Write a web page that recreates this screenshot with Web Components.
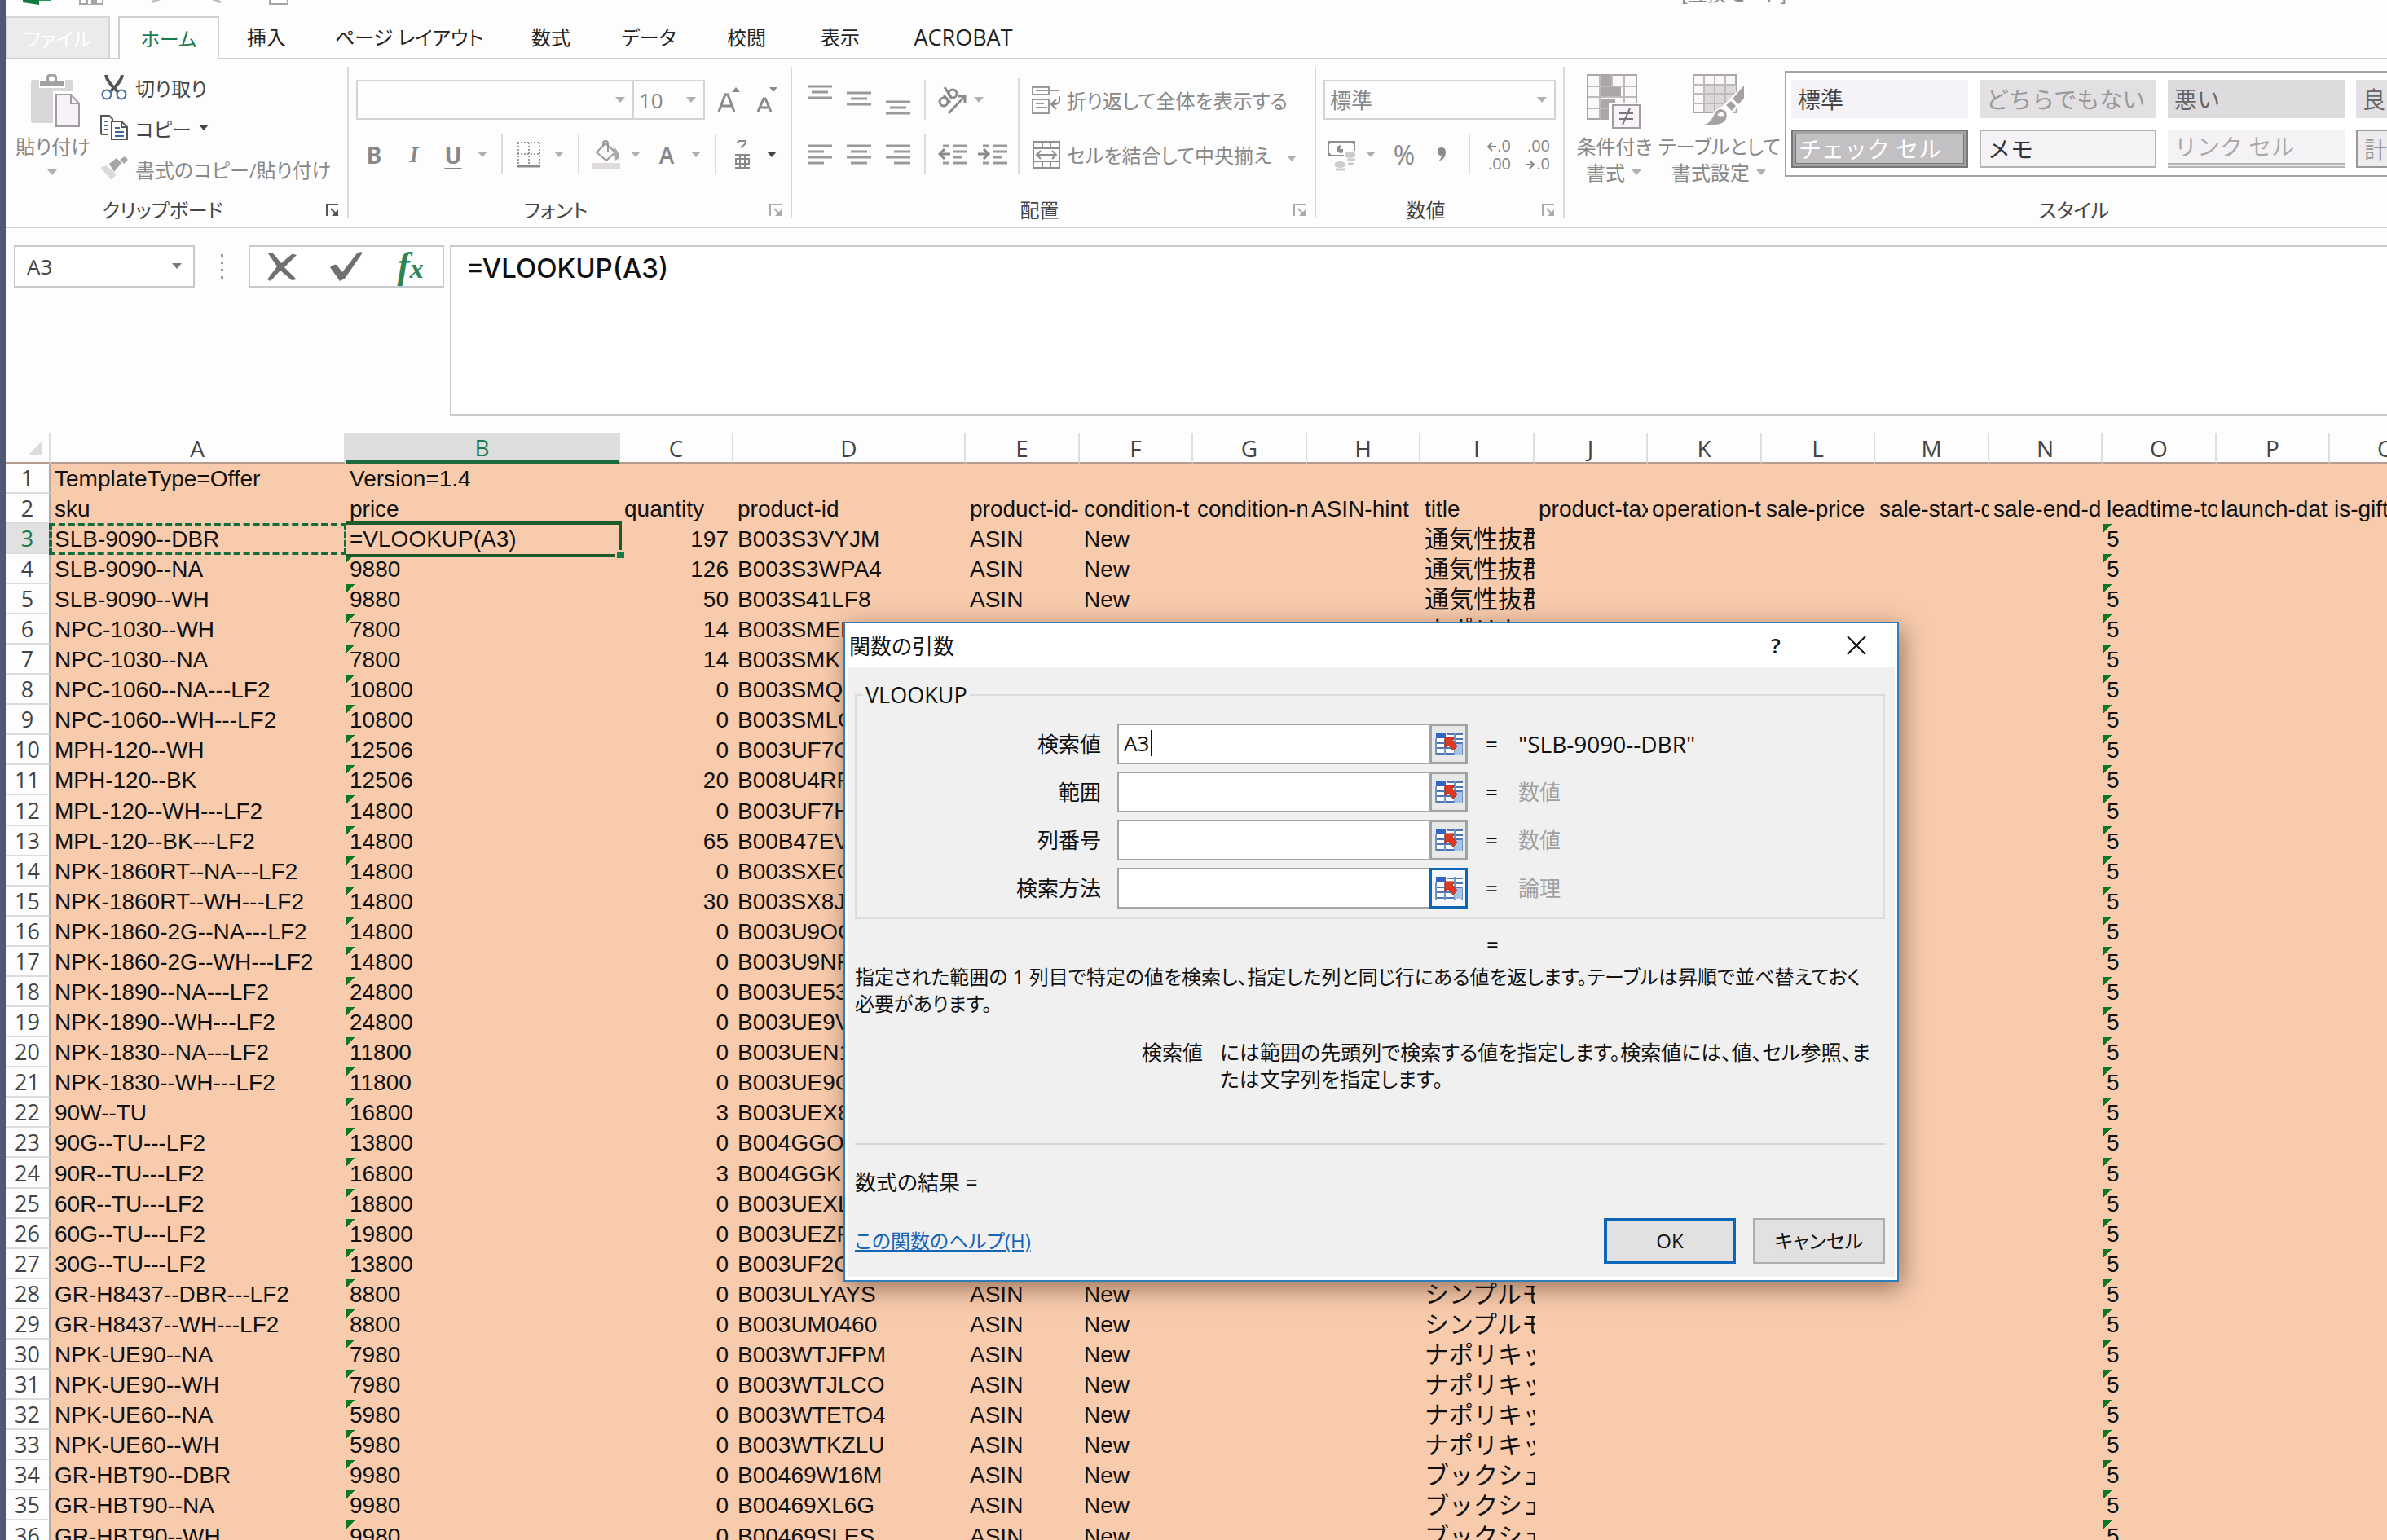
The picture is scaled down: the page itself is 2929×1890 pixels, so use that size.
<!DOCTYPE html>
<html lang="ja">
<head>
<meta charset="utf-8">
<title>VLOOKUP</title>
<style>
html, body { margin: 0; height: 100%; }
body {
  overflow: hidden;
  background: #fdfdfd;
  color: #222;
  font-family: "Open Sans", "Noto Sans CJK JP", sans-serif;
  font-feature-settings: "palt";
  font-size: 24px;
}
</style>
</head>
<body>
<excel-app></excel-app>
<script>
const define = (name, html, setup) => {
  const template = document.createElement('template');
  template.innerHTML = html;
  customElements.define(name, class extends HTMLElement {
    connectedCallback() {
      if (this.shadowRoot) return;
      this.attachShadow({ mode: 'open' }).append(template.content.cloneNode(true));
      if (setup) setup(this, this.shadowRoot);
    }
  });
};

const lines = (rows, w, h) => [w, h, rows.map(([x, y, l]) => `<path d="M${x} ${y}h${l}" stroke="#9a9a9a" stroke-width="3"/>`).join('')];
const ICONS = {
  arrow: [14, 8, '<path d="M0 0h12l-6 7z" fill="currentColor"/>'],
  launcher: [18, 18, '<path d="M2 16V2h14" fill="none" stroke="currentColor" stroke-width="2"/><path d="M7 7l7 7" stroke="currentColor" stroke-width="2"/><path d="M16 8v8H8z" fill="currentColor"/>'],
  excel: [36, 26, '<path d="M0 4l20-4v26L0 23z" fill="#0f7b41"/><path d="M20 5h14v16H20z" fill="#1d9a58"/>'],
  save: [30, 26, '<path d="M1 1h28v24H1z" fill="none" stroke="#a5a5a5" stroke-width="2"/><path d="M8 14h14v11H8z" fill="#a5a5a5"/><path d="M11 18h4v7h-4z" fill="#fff"/>'],
  undo: [28, 26, '<path d="M4 8h12a7 7 0 0 1 0 14l-6 3" fill="none" stroke="#bbb" stroke-width="3"/><path d="M8 1L1 8l7 7z" fill="#bbb"/>'],
  redo: [28, 26, '<path d="M24 8H12a7 7 0 0 0 0 14l6 3" fill="none" stroke="#bbb" stroke-width="3"/><path d="M20 1l7 7-7 7z" fill="#bbb"/>'],
  page: [24, 26, '<path d="M1 1h22v24H1z" fill="#fff" stroke="#a5a5a5" stroke-width="2"/>'],
  paste: [62, 66, '<path d="M3 7h45q4 0 4 4v46q0 3-3 3H3q-3 0-3-3V10q0-3 3-3z" fill="#d9d6d9"/><path d="M10 5h32v12H10z" fill="#fff"/><path d="M11 15V8h8V4q0-4 4-4h5q4 0 4 4v4h8v7z" fill="#a3a0a3"/><circle cx="25.500" cy="6" r="3.500" fill="#fff"/><path d="M27 21h24l11 12v33H27z" fill="#fff"/><path d="M31 25h18l10 11v28H31z" fill="#f6f2f8" stroke="#a09da0" stroke-width="2"/><path d="M49 25v11h10" fill="none" stroke="#a09da0" stroke-width="2"/>'],
  cut: [32, 34, '<path d="M6 2q1 8 14 20M26 2q-1 8-14 20" fill="none" stroke="#555" stroke-width="4"/><circle cx="7" cy="26" r="5.500" fill="#fff" stroke="#3d6a9c" stroke-width="2"/><circle cx="25" cy="26" r="5.500" fill="#fff" stroke="#3d6a9c" stroke-width="2"/>'],
  copy: [34, 32, '<path d="M1 24V1h10l4 4v5M1 24h9" fill="none" stroke="#555" stroke-width="2"/><path d="M5 8h5M5 13h5M5 18h5" stroke="#3d6a9c" stroke-width="2"/><path d="M14 8h12l7 7v15H14z" fill="#fff" stroke="#555" stroke-width="2"/><path d="M26 8v7h7" fill="none" stroke="#555" stroke-width="2"/><path d="M18 16h6M18 21h11M18 26h11" stroke="#3d6a9c" stroke-width="2"/>'],
  painter: [36, 30, '<path d="M1 14l7-3 13 11-6 7z" fill="#dcd8dc"/><path d="M12 9l9-7 6 6-9 11zM13 8l8 13" fill="#a5a5a5"/><path d="M25 4l6-4 4 4-5 5z" fill="#a5a5a5"/>'],
  grow: [32, 32, '<path d="M3 30L11 9h3l8 21M6 23h13" fill="none" stroke="#8a8a8a" stroke-width="3"/><path d="M19 6l5-6 5 6z" fill="#8a8a8a"/>'],
  shrink: [30, 32, '<path d="M2 30L9 14h2l7 16M4 25h12" fill="none" stroke="#8a8a8a" stroke-width="3"/><path d="M16 0h10l-5 6z" fill="#8a8a8a"/>'],
  borders: [30, 32, '<path d="M1 1h28M1 15h28M2 1v28M15 1v28M28 1v28" stroke="#9c9a9c" stroke-width="2" stroke-dasharray="2 2"/><path d="M1 30h28" stroke="#8a8a8a" stroke-width="3"/>'],
  bucket: [36, 36, '<path d="M0 28h34v7H0z" fill="#dedade"/><path d="M5 15L16 4l12 11-11 10z" fill="#fdf8fd" stroke="#999" stroke-width="2"/><path d="M13 9V4q0-3 3-3t3 3v10" fill="none" stroke="#999" stroke-width="2"/><path d="M25 8q8 5 8 14l-5 3-1-9z" fill="#aaa"/>'],
  ruby: [22, 38, '<path d="M6 2h9q0 5-6 8M4 4h3" fill="none" stroke="#888" stroke-width="2"/><path d="M2 19h18M2 35h18M8 19v16M14 19v16M3 24h16v6H3z" fill="none" stroke="#888" stroke-width="2"/>'],
  top: lines([[0, 2, 30], [5, 9, 20], [0, 16, 30]], 30, 18),
  mid: lines([[0, 2, 30], [5, 9, 20], [0, 16, 30]], 30, 18),
  left: lines([[0, 2, 30], [0, 9, 20], [0, 16, 30], [0, 23, 20]], 30, 25),
  center: lines([[0, 2, 30], [5, 9, 20], [0, 16, 30], [5, 23, 20]], 30, 25),
  right: lines([[0, 2, 30], [10, 9, 20], [0, 16, 30], [10, 23, 20]], 30, 25),
  outdent: [36, 25, '<path d="M6 2h8M18 2h18M18 9h18M18 16h12M6 23h8M18 23h18" stroke="#9a9a9a" stroke-width="3"/><path d="M15 12H2M8 6l-6 6 6 6" fill="none" stroke="#8a8a8a" stroke-width="3"/>'],
  indent: [36, 25, '<path d="M6 2h8M18 2h18M18 9h18M18 16h12M6 23h8M18 23h18" stroke="#9a9a9a" stroke-width="3"/><path d="M0 12h13M7 6l6 6-6 6" fill="none" stroke="#8a8a8a" stroke-width="3"/>'],
  orient: [38, 36, '<g fill="none" stroke="#8a8a8a" stroke-width="3"><circle cx="8" cy="20" r="5"/><path d="M8 12l8 9"/><circle cx="19" cy="10" r="5"/><path d="M9 2l8 12"/><path d="M14 34L34 13M26 13h8v8"/></g>'],
  wrap: [36, 36, '<path d="M1 2h20v9H1z" fill="none" stroke="#999" stroke-width="2"/><path d="M5 6h28" stroke="#999" stroke-width="2"/><path d="M1 17h15l5 0v17H1z" fill="none" stroke="#999" stroke-width="2"/><path d="M5 22h10M5 27h14" stroke="#999" stroke-width="2"/><path d="M34 13v6q0 4-8 4M30 17l-6 6 6 6" fill="none" stroke="#888" stroke-width="2"/>'],
  merge: [34, 34, '<path d="M1 1h32v32H1zM1 9h32M1 25h32M12 1v8M22 1v8M12 25v8M22 25v8" fill="none" stroke="#8f8f8f" stroke-width="2"/><path d="M5 17h24M10 12l-5 5 5 5M24 12l5 5-5 5" fill="none" stroke="#8f8f8f" stroke-width="2"/>'],
  currency: [38, 38, '<path d="M1 3h32v17H1z" fill="none" stroke="#8f8f8f" stroke-width="2"/><path d="M0 2h7l-7 6zM34 2h-7l7 6zM0 21h7l-7-6z" fill="#8f8f8f"/><path d="M17 7a5 5 0 1 0 2 9v-4h-4z" fill="#8f8f8f"/><path d="M20 14h14v18H20z" fill="#fff"/><path d="M21 17q6-4 13 0v4q-7 4-13 0zM9 29q6-4 13 0v4q-7 4-13 0z" fill="#cfcacf"/><path d="M24 25h10M25 30h8M10 37h11" stroke="#cfcacf" stroke-width="3"/>'],
  comma: [12, 20, '<path d="M1 6q0-5 5-5 5 0 5 6 0 8-9 11 4-4 4-7-5 0-5-5z" fill="#8a8a8a"/>'],
  leftArrow: [12, 12, '<path d="M12 6H2M7 1L2 6l5 5" fill="none" stroke="#8a8a8a" stroke-width="2"/>'],
  rightArrow: [12, 12, '<path d="M0 6h10M5 1l5 5-5 5" fill="none" stroke="#8a8a8a" stroke-width="2"/>'],
  cond: [68, 68, '<path d="M1 1h60v54H1z" fill="#fbf8fb" stroke="#a9a5a9" stroke-width="2"/><path d="M17 2h14v12H17zM17 16h25v12H17zM17 30h18v12H17zM17 43h12v12H17z" fill="#aaa6aa"/><path d="M16 1v54M31 1v13M46 1v54M1 15h60M1 28h60M1 42h60" stroke="#bdb9bd" stroke-width="2"/><path d="M27 35h41v33H27z" fill="#fff"/><path d="M32 38h33v28H32z" fill="#f7f3f8" stroke="#a19da1" stroke-width="2"/><path d="M40 48h17M40 55h17M53 42l-9 20" stroke="#777" stroke-width="2"/>'],
  tableStyle: [66, 64, '<path d="M1 1h52v46H1z" fill="#fbf8fb" stroke="#a9a5a9" stroke-width="2"/><path d="M14 13h39v34H14z" fill="#dcd8dc"/><path d="M14 1v46M27 1v46M40 1v46M1 13h52M1 24h52M1 36h52" stroke="#bdb9bd" stroke-width="2"/><path d="M67 8L36 40q-12 4-21 24l24-2 10-14 18-22z" fill="#fff"/><path d="M63 14v16l-7 7-7-7z" fill="#a5a1a5"/><path d="M47 33l6 6-5 6-7-7z" fill="#a5a1a5"/><path d="M15 62q8-3 12-14 6-9 14-2 4 16-16 16z" fill="#a5a1a5"/><path d="M30 50q6-7 9 0-3 3-9 0z" fill="#fff"/>'],
  cancel: [38, 36, '<path d="M2 2q4-3 7 1l9 11L31 3q4 0 6 1L22 19l15 15-6 1-14-12L5 36l-4-2 12-16z" fill="#707070"/>'],
  enter: [42, 36, '<path d="M1 19q4-4 8-3l7 9L34 2q4-3 7-1L19 33l-6 3z" fill="#707070"/>'],
  close: [24, 24, '<path d="M1 1l22 22M23 1L1 23" stroke="#111" stroke-width="2"/>'],
  picker: [34, 30, '<path d="M1 1h33v28H1z" fill="#fff"/><path d="M1 1h12v7H1z" fill="#3565c4"/><path d="M15 3h19M13 9h21M1 14h33M1 20h33M1 27h33" stroke="#4c76b4" stroke-width="2"/><path d="M12 9v20M24 1v28M1 8v21M33 14v15" stroke="#6f94c8" stroke-width="2"/><path d="M24 15h9v13h-9z" fill="#a9c3e6"/><path d="M12 7h11l-2 4 6 7-5 5-6-7-4 4z" fill="#dd3a22" stroke="#b52414"/>'],
  corner: [18, 18, '<path d="M18 0v18H0z" fill="#dcdcdc"/>']
};

define('ui-icon', '<style>:host{display:inline-flex;flex:none}svg{display:block;overflow:visible}</style>', (el, root) => {
  const [w, h, body] = ICONS[el.getAttribute('name')];
  root.innerHTML += `<svg width="${w}" height="${h}" viewBox="0 0 ${w} ${h}" aria-hidden="true">${body}</svg>`;
});

define('title-strip', `
<style>
:host { display: flex; height: 20px; overflow: hidden; align-items: flex-start; }
nav { display: flex; gap: 49px; padding-left: 21px; flex: 0 0 2056px; box-sizing: border-box; }
nav ui-icon { margin-top: -20px; }
nav ui-icon[name="save"] { margin-left: -16px; }
nav ui-icon[name="undo"], nav ui-icon[name="redo"] { margin-top: -22px; }
span { color: #8a8a8a; font-size: 24px; line-height: 32px; margin-top: -24px; }
</style>
<nav><ui-icon name="excel"></ui-icon><ui-icon name="save"></ui-icon><ui-icon name="undo"></ui-icon><ui-icon name="redo"></ui-icon><ui-icon name="page"></ui-icon></nav>
<span>[互換モード]</span>`);

define('ribbon-tabs', `
<style>
:host { display: flex; height: 53px; box-sizing: border-box; border-bottom: 2px solid #cfcfcf; }
button { all: unset; box-sizing: border-box; height: 51px; font-size: 24px; text-align: center; white-space: nowrap; color: #222; flex: 0 0 var(--w); line-height: 52px; }
.file { background: #ebebeb; color: #fff; border: 2px solid #d6d6d6; border-bottom: 0; margin-right: 10px; }
.home { background: #fdfdfd; color: #1b7a4b; border: 2px solid #cfcfcf; border-bottom: 0; height: 53px; }
.latin { font-size: 27px; }
</style>
<button class="file" style="--w:128px">ファイル</button>
<button class="home" style="--w:124px">ホーム</button>
<button style="--w:116px">挿入</button>
<button style="--w:234px">ページ レイアウト</button>
<button style="--w:114px">数式</button>
<button style="--w:126px">データ</button>
<button style="--w:114px">校閲</button>
<button style="--w:116px">表示</button>
<button class="latin" style="--w:186px">ACROBAT</button>`);

define('ribbon-group', `
<style>
:host { display: flex; flex-direction: column; box-sizing: border-box; height: 186px; border-right: 2px solid #d9d9d9; }
.body { flex: 1; display: flex; min-height: 0; }
footer { display: flex; align-items: center; height: 20px; padding-right: 2px; line-height: 20px; font-size: 24px; color: #444; }
footer span { flex: 1; text-align: center; white-space: nowrap; }
button { all: unset; width: 32px; display: flex; justify-content: center; color: #aaa; }
:host([active]) button { color: #555; }
</style>
<div class="body"><slot></slot></div>
<footer><span></span><button><ui-icon name="launcher"></ui-icon></button></footer>`, (el, root) => {
  root.querySelector('span').textContent = el.getAttribute('label');
  root.querySelector('button').setAttribute('aria-label', el.getAttribute('label') + 'の設定');
});

define('style-swatch', `
<style>
:host { display: block; box-sizing: border-box; height: 47px; background: #e3e0e3; color: #999; font-feature-settings: normal; }
button { all: unset; box-sizing: border-box; width: 100%; height: 100%; padding-left: 8px; font-size: 28px; line-height: 38px; white-space: nowrap; overflow: hidden; }
:host([kind=normal]) { background: #f5f2f8; color: #444; }
:host([kind=bad]) { background: #dddbdd; color: #666; }
:host([kind=good]) { color: #666; }
:host([kind=check]) { background: #c3c0c3; color: #fff; border: 2px solid #777; }
:host([kind=check]) button { border: 3px solid #a5a2a5; outline: 1px solid #777; outline-offset: -4px; padding-left: 4px; line-height: 32px; }
:host([kind=memo]) { background: #f5f2f6; color: #333; border: 2px solid #b5b2b5; }
:host([kind=link]) { background: #f5f2f6; color: #aaa; border-bottom: 6px double #b5b2b5; }
:host([kind=calc]) { background: #eeebee; border: 2px solid #999; }
</style>
<button><slot></slot></button>`);

define('excel-ribbon', `
<style>
:host { display: flex; box-sizing: border-box; height: 207px; padding-top: 9px; border-bottom: 2px solid #cfcfcf; overflow: hidden; color: #888; }
ribbon-group { flex: 0 0 var(--w); min-width: 0; }
button { all: unset; display: flex; align-items: center; justify-content: center; white-space: nowrap; }
.arrow { color: #b0b0b0; }
.dark { color: #444; }
.big { flex-direction: column; justify-content: flex-start; line-height: 32px; font-size: 24px; box-sizing: border-box; padding-top: 9px; }
.big span { display: flex; align-items: center; gap: 8px; min-height: 32px; }
.big ui-icon:first-child { height: 66px; margin-bottom: 7px; }
.big ui-icon[name="paste"] { margin-left: 8px; }
.big span ui-icon:first-child { height: 8px; margin: 0; }
.stack { display: flex; flex-direction: column; }
.stack button { height: 50px; justify-content: flex-start; gap: 9px; }
.stack button ui-icon:first-child { width: 34px; justify-content: center; }
.rows { display: flex; flex-direction: column; gap: 18px; padding: 16px 0 0 9px; }
.wide { flex: 1; min-width: 0; padding-left: 0; }
.row { display: flex; height: 49px; }
.row > * { flex: 0 0 var(--w); }
.sep::before { content: ""; height: 100%; border-left: 2px solid #dcdcdc; }
.sep { display: flex; justify-content: center; }
.tall { padding-top: 14px; flex: 0 0 18px; height: 118px; }
select { appearance: none; box-sizing: border-box; border: 2px solid #d4d4d4; border-radius: 0; background: #fdfdfd; color: #888; font: inherit; font-size: 26px; padding: 0 6px; width: 100%; height: 49px; opacity: 1; }
.combo { display: flex; align-items: center; position: relative; }
.combo ui-icon { position: absolute; right: 9px; color: #b0b0b0; pointer-events: none; }
.size select { margin-left: -2px; width: 89px; }
b, i, u { font-size: 28px; }
i { font-family: "Liberation Serif", serif; font-weight: bold; }
u { font-weight: bold; text-underline-offset: 5px; }
.valign { align-items: flex-start; }
.dec { display: block; font-size: 20px; line-height: 22px; text-align: right; }
.dec ui-icon { margin-right: 1px; }
.text { justify-content: flex-start; }
.text > * { flex: none; }
.text ui-icon:first-child { width: 50px; justify-content: center; }
.text .arrow { margin-left: 19px; }
.text .arrow ui-icon { width: 14px; }
.gallery { margin: 5px 0 0 12px; flex: 1; height: 130px; box-sizing: border-box; border: 2px solid #a3a3a3; padding: 9px 6px; display: grid; grid-template-columns: repeat(4, 217px); gap: 14px; overflow: hidden; background: #fff; }
</style>
<ribbon-group active label="クリップボード" style="--w:421px">
  <button class="big" style="width:116px"><ui-icon name="paste"></ui-icon><span>貼り付け</span><span class="arrow"><ui-icon name="arrow"></ui-icon></span></button>
  <div class="stack">
    <button class="dark"><ui-icon name="cut"></ui-icon>切り取り</button>
    <button class="dark"><ui-icon name="copy"></ui-icon>コピー<ui-icon name="arrow"></ui-icon></button>
    <button><ui-icon name="painter"></ui-icon>書式のコピー/貼り付け</button>
  </div>
</ribbon-group>
<ribbon-group label="フォント" style="--w:544px">
  <div class="rows">
    <div class="row">
      <div class="combo" style="--w:341px"><select aria-label="フォント名"><option></option></select><ui-icon name="arrow"></ui-icon></div>
      <div class="combo size" style="--w:87px"><select aria-label="フォント サイズ"><option>10</option></select><ui-icon name="arrow"></ui-icon></div>
      <button style="--w:60px" aria-label="拡大"><ui-icon name="grow"></ui-icon></button>
      <button style="--w:36px" aria-label="縮小"><ui-icon name="shrink"></ui-icon></button>
    </div>
    <div class="row">
      <button style="--w:44px"><b>B</b></button><button style="--w:54px"><i>I</i></button><button style="--w:42px"><u>U</u></button>
      <button class="arrow" style="--w:32px" aria-label="下線"><ui-icon name="arrow"></ui-icon></button><span class="sep" style="--w:14px"></span>
      <button style="--w:52px" aria-label="罫線"><ui-icon name="borders"></ui-icon></button><button class="arrow" style="--w:24px" aria-label="罫線の種類"><ui-icon name="arrow"></ui-icon></button><span class="sep" style="--w:22px"></span>
      <button style="--w:48px" aria-label="塗りつぶし"><ui-icon name="bucket"></ui-icon></button><button class="arrow" style="--w:24px" aria-label="塗りつぶしの色"><ui-icon name="arrow"></ui-icon></button>
      <button style="--w:50px;font-size:28px;font-weight:600">A</button><button class="arrow" style="--w:24px" aria-label="文字の色"><ui-icon name="arrow"></ui-icon></button><span class="sep" style="--w:22px"></span>
      <button style="--w:44px" aria-label="ふりがな"><ui-icon name="ruby"></ui-icon></button><button class="dark" style="--w:30px" aria-label="ふりがなの設定"><ui-icon name="arrow"></ui-icon></button>
    </div>
  </div>
</ribbon-group>
<ribbon-group label="配置" style="--w:643px">
  <div class="rows">
    <div class="row">
      <button class="valign" style="--w:50px;padding-top:6px" aria-label="上揃え"><ui-icon name="top"></ui-icon></button>
      <button class="valign" style="--w:46px;padding-top:14px" aria-label="上下中央"><ui-icon name="mid"></ui-icon></button>
      <button class="valign" style="--w:50px;padding-top:25px" aria-label="下揃え"><ui-icon name="mid"></ui-icon></button>
      <span class="sep" style="--w:16px"></span>
      <button style="--w:52px" aria-label="方向"><ui-icon name="orient"></ui-icon></button><button class="arrow" style="--w:12px" aria-label="方向の種類"><ui-icon name="arrow"></ui-icon></button>
    </div>
    <div class="row">
      <button style="--w:50px" aria-label="左揃え"><ui-icon name="left"></ui-icon></button>
      <button style="--w:46px" aria-label="中央揃え"><ui-icon name="center"></ui-icon></button>
      <button style="--w:50px" aria-label="右揃え"><ui-icon name="right"></ui-icon></button>
      <span class="sep" style="--w:16px"></span>
      <button style="--w:52px" aria-label="インデントを減らす"><ui-icon name="outdent"></ui-icon></button><button style="--w:46px" aria-label="インデントを増やす"><ui-icon name="indent"></ui-icon></button>
    </div>
  </div>
  <span class="sep tall"></span>
  <div class="rows wide">
    <button class="row text"><ui-icon name="wrap"></ui-icon>折り返して全体を表示する</button>
    <button class="row text"><ui-icon name="merge"></ui-icon>セルを結合して中央揃え<span class="arrow"><ui-icon name="arrow"></ui-icon></span></button>
  </div>
</ribbon-group>
<ribbon-group label="数値" style="--w:305px">
  <div class="rows">
    <div class="row"><div class="combo" style="--w:285px"><select aria-label="表示形式"><option>標準</option></select><ui-icon name="arrow"></ui-icon></div></div>
    <div class="row">
      <button style="--w:48px" aria-label="通貨"><ui-icon name="currency"></ui-icon></button><button class="arrow" style="--w:22px" aria-label="通貨の種類"><ui-icon name="arrow"></ui-icon></button>
      <button style="--w:58px;font-size:32px">%</button><button style="--w:34px" aria-label="桁区切り"><ui-icon name="comma"></ui-icon></button>
      <span class="sep" style="--w:34px"></span>
      <button class="dec" style="--w:34px"><ui-icon name="leftArrow"></ui-icon>.0<br>.00</button>
      <button class="dec" style="--w:48px">.00<br><ui-icon name="rightArrow"></ui-icon>.0</button>
    </div>
  </div>
</ribbon-group>
<ribbon-group label="スタイル" style="--w:1286px">
  <button class="big" style="width:122px"><ui-icon name="cond"></ui-icon><span>条件付き</span><span>書式<ui-icon class="arrow" name="arrow"></ui-icon></span></button>
  <button class="big" style="width:136px"><ui-icon name="tableStyle"></ui-icon><span>テーブルとして</span><span>書式設定<ui-icon class="arrow" name="arrow"></ui-icon></span></button>
  <div class="gallery">
    <style-swatch kind="normal">標準</style-swatch><style-swatch>どちらでもない</style-swatch><style-swatch kind="bad">悪い</style-swatch><style-swatch kind="good">良い</style-swatch>
    <style-swatch kind="check">チェック セル</style-swatch><style-swatch kind="memo">メモ</style-swatch><style-swatch kind="link">リンク セル</style-swatch><style-swatch kind="calc">計算</style-swatch>
  </div>
</ribbon-group>`);

define('formula-bar', `
<style>
:host { display: flex; align-items: flex-start; padding: 21px 0 22px 10px; }
.name { position: relative; display: flex; align-items: center; width: 222px; color: #777; }
input { box-sizing: border-box; width: 100%; height: 52px; border: 2px solid #c9c9c9; padding: 0 14px; font: inherit; font-size: 26px; color: #444; background: #fff; border-radius: 0; }
.name ui-icon { position: absolute; right: 14px; }
.dots { width: 66px; height: 52px; display: flex; flex-direction: column; gap: 6px; align-items: center; justify-content: center; }
.dots i { width: 3px; height: 3px; background: #999; }
.tools { display: flex; box-sizing: border-box; width: 240px; height: 52px; border: 2px solid #c9c9c9; background: #fff; margin-right: 7px; }
.tools button { all: unset; flex: 1; display: flex; align-items: center; justify-content: center; }
.tools .fx { font: italic bold 46px/46px "Liberation Serif", serif; color: #2b8556; display: block; text-align: center; }
.fx small { font-size: 34px; }
textarea { flex: 1; box-sizing: border-box; height: 209px; resize: none; border: 2px solid #c9c9c9; border-right: 0; border-radius: 0; padding: 6px 18px; font: 500 33px/40px Inter, sans-serif; color: #111; background: #fff; }
</style>
<div class="name"><input aria-label="名前ボックス" value="A3"><ui-icon name="arrow"></ui-icon></div>
<div class="dots"><i></i><i></i><i></i><i></i></div>
<div class="tools"><button aria-label="キャンセル"><ui-icon name="cancel"></ui-icon></button><button aria-label="入力"><ui-icon name="enter"></ui-icon></button><button class="fx">f<small>x</small></button></div>
<textarea aria-label="数式">=VLOOKUP(A3)</textarea>`);

const COLUMNS = [['A', 362], ['B', 337], ['C', 139], ['D', 285], ...'EFGHIJKLMNOPQ'.split('').map((c, i) => [c, i % 2 ? 139 : 140])];
const HEAD = ['sku', 'price', 'quantity', 'product-id', 'product-id-', 'condition-t', 'condition-n', 'ASIN-hint', 'title', 'product-tax', 'operation-t', 'sale-price', 'sale-start-d', 'sale-end-d', 'leadtime-to', 'launch-dat', 'is-gift'];
const AIR = '通気性抜群', NAPOLI = 'ナポリキッ', SIMPLE = 'シンプルモ', BOOK = 'ブックシェ';
const ITEMS = [
  ['SLB-9090--DBR', '=VLOOKUP(A3)', 197, 'B003S3VYJM', AIR], ['SLB-9090--NA', 9880, 126, 'B003S3WPA4', AIR], ['SLB-9090--WH', 9880, 50, 'B003S41LF8', AIR],
  ['NPC-1030--WH', 7800, 14, 'B003SMEF6M', NAPOLI], ['NPC-1030--NA', 7800, 14, 'B003SMK', ''], ['NPC-1060--NA---LF2', 10800, 0, 'B003SMQ', ''],
  ['NPC-1060--WH---LF2', 10800, 0, 'B003SMLO', ''], ['MPH-120--WH', 12506, 0, 'B003UF7C', ''], ['MPH-120--BK', 12506, 20, 'B008U4RF', ''],
  ['MPL-120--WH---LF2', 14800, 0, 'B003UF7H', ''], ['MPL-120--BK---LF2', 14800, 65, 'B00B47EV', ''], ['NPK-1860RT--NA---LF2', 14800, 0, 'B003SXEC', ''],
  ['NPK-1860RT--WH---LF2', 14800, 30, 'B003SX8J', ''], ['NPK-1860-2G--NA---LF2', 14800, 0, 'B003U9OO', ''], ['NPK-1860-2G--WH---LF2', 14800, 0, 'B003U9NF', ''],
  ['NPK-1890--NA---LF2', 24800, 0, 'B003UE53', ''], ['NPK-1890--WH---LF2', 24800, 0, 'B003UE9V', ''], ['NPK-1830--NA---LF2', 11800, 0, 'B003UEN1', ''],
  ['NPK-1830--WH---LF2', 11800, 0, 'B003UE9C', ''], ['90W--TU', 16800, 3, 'B003UEX8', ''], ['90G--TU---LF2', 13800, 0, 'B004GGO', ''],
  ['90R--TU---LF2', 16800, 3, 'B004GGK', ''], ['60R--TU---LF2', 18800, 0, 'B003UEXL', ''], ['60G--TU---LF2', 19800, 0, 'B003UEZF', ''],
  ['30G--TU---LF2', 13800, 0, 'B003UF2C', ''], ['GR-H8437--DBR---LF2', 8800, 0, 'B003ULYAYS', SIMPLE], ['GR-H8437--WH---LF2', 8800, 0, 'B003UM0460', SIMPLE],
  ['NPK-UE90--NA', 7980, 0, 'B003WTJFPM', NAPOLI], ['NPK-UE90--WH', 7980, 0, 'B003WTJLCO', NAPOLI], ['NPK-UE60--NA', 5980, 0, 'B003WTETO4', NAPOLI],
  ['NPK-UE60--WH', 5980, 0, 'B003WTKZLU', NAPOLI], ['GR-HBT90--DBR', 9980, 0, 'B00469W16M', BOOK], ['GR-HBT90--NA', 9980, 0, 'B00469XL6G', BOOK],
  ['GR-HBT90--WH', 9980, 0, 'B00469SLES', BOOK]
];

define('sheet-grid', `
<style>
:host { display: block; }
table { table-layout: fixed; width: 0; border-collapse: separate; border-spacing: 0; font: 28px/36px "Liberation Sans", "Noto Sans CJK JP", sans-serif; font-feature-settings: normal; color: #111; }
th { font: 28px/34px "Open Sans", sans-serif; color: #444; padding: 0; background: #fdfdfd; }
thead th { height: 37px; box-sizing: border-box; border-right: 2px solid #dedede; border-bottom: 2px solid #b39c8e; }
thead th.on { background: #dedede; color: #1b7a4b; border-bottom: 4px solid #1d6b41; line-height: 32px; border-right-color: #dedede; }
thead ui-icon { display: flex; justify-content: flex-end; padding-right: 8px; }
tbody th { height: 37px; box-sizing: border-box; border-bottom: 2px solid #dcdcdc; border-right: 2px solid #b8a89e; line-height: 35px; font-size: 27px; }
tbody tr:nth-child(12n) th { height: 38px; }
tbody th.on { background: #e1e1e1; color: #1b7a4b; }
td { padding: 1px 0 0 5px; background-color: #f8cbad; white-space: nowrap; overflow: hidden; box-sizing: border-box; }
td.num { text-align: right; padding: 1px 6px 0 0; }
td.title { font-size: 30px; }
td.flag { background-image: linear-gradient(to bottom right, #0b7a1e 50%, transparent 50%); background-size: 11px 12px; background-repeat: no-repeat; }
td.ref, td.edit { position: relative; overflow: visible; }
td.ref::after { content: ""; position: absolute; inset: -1px -2px -1px -2px; border: 4px dashed #146c3c; }
td.edit::after { content: ""; position: absolute; inset: -3px -2px -4px 0; border: 4px solid #1c5a2c; border-left: 0; }
td.edit::before { content: ""; position: absolute; right: -5px; bottom: -5px; width: 9px; height: 8px; background: #1b7a4b; border: 2px solid #f8cbad; border-width: 2px 0 0 2px; z-index: 1; }
</style>
<table><colgroup><col style="width:55px"></colgroup><thead><tr><th><ui-icon name="corner"></ui-icon></th></tr></thead><tbody></tbody></table>`, (el, root) => {
  const add = (parent, tag, text = '', cls = '') => {
    const node = document.createElement(tag);
    node.textContent = text;
    if (cls) node.className = cls;
    parent.append(node);
    return node;
  };
  for (const [name, width] of COLUMNS) {
    add(root.querySelector('colgroup'), 'col').style.width = width + 'px';
    add(root.querySelector('thead tr'), 'th', name, name === 'B' ? 'on' : '');
  }
  const rows = [['TemplateType=Offer', 'Version=1.4'], HEAD,
    ...ITEMS.map(([sku, price, qty, id, title], i) => {
      const hidden = i > 3 && i < 25;
      return [sku, price, qty, id, hidden ? '' : 'ASIN', hidden ? '' : 'New', '', '', title, '', '', '', '', '', 5];
    })];
  rows.forEach((cells, r) => {
    const tr = add(root.querySelector('tbody'), 'tr');
    add(tr, 'th', r + 1, r === 2 ? 'on' : '');
    COLUMNS.forEach((_, c) => {
      let cls = '';
      if (r > 1 && c === 2) cls = 'num';
      if (r > 1 && c === 8) cls = 'title';
      if ((r > 2 && c === 1) || (r > 1 && c === 14)) cls = 'flag';
      if (r === 2 && c === 0) cls = 'ref';
      if (r === 2 && c === 1) cls = 'edit';
      add(tr, 'td', cells[c] ?? '', cls);
    });
  });
});

define('argument-row', `
<style>
:host { display: flex; align-items: center; height: 50px; }
label { flex: 0 0 300px; text-align: right; margin-right: 20px; }
.field { position: relative; flex: 0 0 430px; display: flex; }
input { flex: 1; min-width: 0; box-sizing: border-box; height: 50px; border: 2px solid #a5a5a5; border-right: 0; border-radius: 0; background: #fff; font: inherit; padding: 0 6px 2px; color: #111; }
button { all: unset; box-sizing: border-box; width: 47px; height: 50px; border: 3px solid #a0a3a8; background: #e8e8e8; display: flex; align-items: center; justify-content: center; }
:host([hot]) button { border-color: #0d66b8; background: #f4f8fc; }
.caret { display: none; position: absolute; left: 41px; top: 8px; width: 2px; height: 32px; background: #111; }
:host([editing]) .caret { display: block; }
.eq { flex: 0 0 62px; padding-left: 22px; box-sizing: border-box; }
.out { color: #a0a0a0; white-space: nowrap; }
:host([editing]) .out { color: #111; font-size: 28px; }
</style>
<label for="value"></label>
<div class="field"><input id="value"><span class="caret"></span><button aria-label="範囲を選択"><ui-icon name="picker"></ui-icon></button></div>
<span class="eq">=</span><span class="out"><slot></slot></span>`, (el, root) => {
  root.querySelector('label').textContent = el.getAttribute('label');
  root.querySelector('input').value = el.getAttribute('value') || '';
});

define('function-dialog', `
<style>
:host { display: block; box-sizing: border-box; width: 1295px; border: 2px solid #2d7ebd; background: #fff; padding: 0 3px 4px; font-size: 26px; color: #111; box-shadow: 4px 8px 28px rgba(60, 30, 10, .5); }
header { display: flex; align-items: center; height: 54px; }
header span { flex: 1; padding-left: 2px; }
header button { all: unset; width: 104px; display: flex; justify-content: center; font-weight: 600; }
header button:last-child { width: 94px; }
main { background: #f0f0f0; padding: 14px 12px 0 9px; height: 748px; box-sizing: border-box; display: flex; flex-direction: column; line-height: 34px; }
fieldset { margin: 0; padding: 15px 0 11px; border: 2px solid #dcdcdc; display: flex; flex-direction: column; gap: 9px; min-width: 0; height: 295px; box-sizing: border-box; }
legend { margin-left: 8px; padding: 0 3px; line-height: 40px; font-size: 27px; }
.total { padding-left: 775px; margin-top: 14px; }
.about { margin: 6px 0 0; font-size: 24px; line-height: 33px; white-space: nowrap; }
.arg { display: flex; gap: 21px; margin: 27px 0 0 352px; font-size: 25px; line-height: 33px; white-space: nowrap; }
.arg p { margin: 0; }
hr { width: 100%; border: 0; border-top: 2px solid #d6d6d6; margin: 62px 0 29px; }
footer { display: flex; align-items: center; gap: 21px; margin-top: 27px; }
a { color: #1464b8; margin-right: auto; font-size: 24px; }
footer button { all: unset; box-sizing: border-box; width: 162px; height: 56px; border: 2px solid #adadad; background: #e1e1e1; text-align: center; font-size: 24px; }
footer .ok { border: 4px solid #0d66b8; }
</style>
<header><span>関数の引数</span><button aria-label="ヘルプ">?</button><button aria-label="閉じる"><ui-icon name="close"></ui-icon></button></header>
<main>
  <fieldset><legend>VLOOKUP</legend>
    <argument-row editing label="検索値" value="A3">"SLB-9090--DBR"</argument-row>
    <argument-row label="範囲">数値</argument-row>
    <argument-row label="列番号">数値</argument-row>
    <argument-row hot label="検索方法">論理</argument-row>
  </fieldset>
  <div class="total">=</div>
  <p class="about">指定された範囲の 1 列目で特定の値を検索し、指定した列と同じ行にある値を返します。テーブルは昇順で並べ替えておく<br>必要があります。</p>
  <div class="arg"><span>検索値</span><p>には範囲の先頭列で検索する値を指定します。検索値には、値、セル参照、ま<br>たは文字列を指定します。</p></div>
  <hr>
  <div>数式の結果 =</div>
  <footer><a href="#help">この関数のヘルプ(H)</a><button class="ok">OK</button><button>キャンセル</button></footer>
</main>`);

define('excel-app', `
<style>
:host { display: flex; flex-direction: column; position: relative; height: 100vh; overflow: hidden; box-sizing: border-box; border-left: 7px solid #4d5973; }
:host > * { flex: none; }
function-dialog { position: absolute; left: 1028px; top: 763px; }
</style>
<title-strip></title-strip>
<ribbon-tabs></ribbon-tabs>
<excel-ribbon></excel-ribbon>
<formula-bar></formula-bar>
<sheet-grid></sheet-grid>
<function-dialog role="dialog" aria-label="関数の引数"></function-dialog>`);
</script>
</body>
</html>
